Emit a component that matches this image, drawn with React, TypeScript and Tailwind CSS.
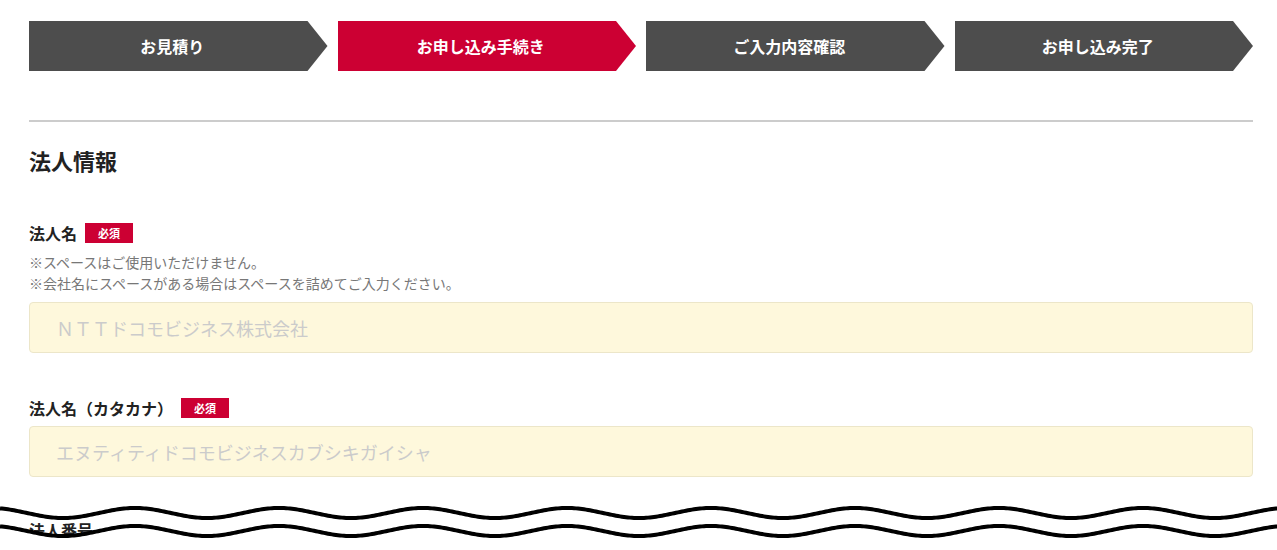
import React from "react";

const steps = [
  { label: "お見積り", active: false },
  { label: "お申し込み手続き", active: true },
  { label: "ご入力内容確認", active: false },
  { label: "お申し込み完了", active: false },
];

// wavy "omitted" mark at the bottom of the capture
function wave(mid: number) {
  const pts: string[] = [];
  for (let x = 0; x <= 1280; x += 2) {
    const y = mid - 5 * Math.cos((2 * Math.PI * (x + 9)) / 144);
    pts.push(`${x},${y.toFixed(2)}`);
  }
  return pts;
}
const line1 = wave(18);
const line2 = wave(36);

function Badge() {
  return (
    <span className="flex h-[20px] w-[48px] items-center justify-center bg-[#cc0033] text-[11px] font-bold text-white">
      必須
    </span>
  );
}

function Field({
  label,
  required,
  notes,
  placeholder,
  className = "mt-[45px]",
}: {
  label: string;
  required?: boolean;
  notes?: string[];
  placeholder: string;
  className?: string;
}) {
  return (
    <div className={className}>
      <div className="flex h-[20px] items-center gap-[8px]">
        <span className="text-[16px] font-bold text-[#222]">{label}</span>
        {required && <Badge />}
      </div>
      {notes && (
        <div className="mt-[9px] text-[14px] leading-[21px] text-[#777]">
          {notes.map((n) => (
            <p key={n}>{n}</p>
          ))}
        </div>
      )}
      <input
        className="mt-[8px] block h-[51px] w-full rounded-[4px] border border-[#ece6c9] bg-[#fef8dc] pl-[26px] text-[18px] outline-none placeholder:text-[#cbcbcb]"
        placeholder={placeholder}
      />
    </div>
  );
}

export default function App() {
  return (
    <div
      className="relative h-[550px] overflow-hidden bg-white"
      style={{ fontFamily: '"Noto Sans CJK JP", "Noto Sans", sans-serif' }}
    >
      <div className="ml-[29px] w-[1224px] pt-[21px]">
        <ol className="flex h-[50px] gap-[10px]">
          {steps.map((s) => (
            <li
              key={s.label}
              className={`flex flex-1 items-center justify-center pr-[12px] text-[16px] font-bold text-white [clip-path:polygon(0_0,calc(100%_-_20px)_0,100%_50%,calc(100%_-_20px)_100%,0_100%)] ${
                s.active ? "bg-[#cc0033]" : "bg-[#4d4d4d]"
              }`}
            >
              {s.label}
            </li>
          ))}
        </ol>

        <div className="mt-[49px] h-[2px] bg-[#cccccc]" />

        <h2 className="mt-[22px] text-[22px] font-bold leading-[33px] text-[#222]">
          法人情報
        </h2>

        <Field
          className="mt-[46px]"
          label="法人名"
          required
          notes={[
            "※スペースはご使用いただけません。",
            "※会社名にスペースがある場合はスペースを詰めてご入力ください。",
          ]}
          placeholder="ＮＴＴドコモビジネス株式会社"
        />
        <Field
          label="法人名（カタカナ）"
          required
          placeholder="エヌティティドコモビジネスカブシキガイシャ"
        />
        <Field className="mt-[43px]" label="法人番号" placeholder="" />
      </div>

      <svg
        className="absolute left-0 top-[495px]"
        width="1277"
        height="55"
        viewBox="0 0 1277 55"
      >
        <polygon points={`${line2.join(" ")} 1280,55 0,55`} fill="#fff" />
        <polyline points={line1.join(" ")} fill="none" stroke="#000" strokeWidth="4" />
        <polyline points={line2.join(" ")} fill="none" stroke="#000" strokeWidth="4" />
      </svg>
    </div>
  );
}
